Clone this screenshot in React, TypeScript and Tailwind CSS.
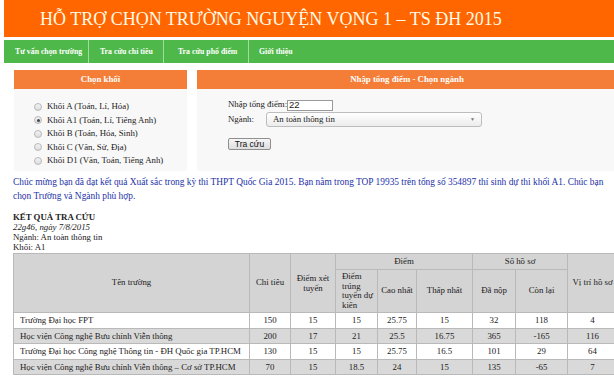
import React from "react";

const serif = { fontFamily: '"Liberation Serif", "Times New Roman", serif' };
const sans = { fontFamily: '"Liberation Sans", Arial, sans-serif' };

const khoi = [
  { label: "Khối A (Toán, Lí, Hóa)", checked: false },
  { label: "Khối A1 (Toán, Lí, Tiếng Anh)", checked: true },
  { label: "Khối B (Toán, Hóa, Sinh)", checked: false },
  { label: "Khối C (Văn, Sử, Địa)", checked: false },
  { label: "Khối D1 (Văn, Toán, Tiếng Anh)", checked: false },
];

const rows = [
  ["Trường Đại học FPT", "150", "15", "15", "25.75", "15", "32", "118", "4"],
  ["Học viện Công nghệ Bưu chính Viễn thông", "200", "17", "21", "25.5", "16.75", "365", "-165", "116"],
  ["Trường Đại học Công nghệ Thông tin - ĐH Quốc gia TP.HCM", "130", "15", "15", "25.75", "16.5", "101", "29", "64"],
  ["Học viện Công nghệ Bưu chính Viễn thông – Cơ sở TP.HCM", "70", "15", "18.5", "24", "15", "135", "-65", "7"],
];

const navItems = ["Tư vấn chọn trường", "Tra cứu chỉ tiêu", "Tra cứu phổ điểm", "Giới thiệu"];

function Radio({ checked }: { checked: boolean }) {
  return (
    <span className="w-[8px] h-[8px] rounded-full border border-[#b8b8b8] bg-gradient-to-b from-[#f4f4f4] to-[#dcdcdc] flex items-center justify-center shrink-0">
      {checked && <span className="w-[3px] h-[3px] rounded-full bg-[#444]" />}
    </span>
  );
}

export default function App() {
  return (
    <div className="w-[614px] h-[380px] overflow-hidden bg-white text-[#222]" style={serif}>
      <div className="w-[660px] pl-[4px]">
        {/* Header */}
        <div className="h-[37px] bg-[#ff6600] flex items-center pl-[36px]">
          <h1 className="text-[18px] leading-none text-[#fffbe8] whitespace-nowrap">
            HỖ TRỢ CHỌN TRƯỜNG NGUYỆN VỌNG 1 – TS ĐH 2015
          </h1>
        </div>

        {/* Nav */}
        <div className="mt-[3px] h-[23px] bg-[#4fb84a] flex">
          {navItems.map((n, i) => (
            <div
              key={n}
              className={
                "flex items-center whitespace-nowrap text-white font-bold text-[7.8px] " +
                (i === 0 ? "w-[85px] pl-[11px] " : i === 1 ? "w-[75px] pl-[11px] " : i === 2 ? "w-[85px] pl-[14px] " : "pl-[10px] ") +
                (i < 3 ? "border-r border-[#a4dca0]" : "")
              }
            >
              {n}
            </div>
          ))}
        </div>

        {/* Panels */}
        <div className="mt-[7px] flex gap-[10px] pl-[10px]">
          <div className="w-[173px] bg-[#f8f8f8]">
            <div className="h-[19px] bg-[#f47e38] flex items-center justify-center text-white font-bold text-[8.8px]">
              Chọn khối
            </div>
            <div className="h-[82px] pt-[11px] pl-[20px] flex flex-col">
              {khoi.map((k) => (
                <div key={k.label} className="h-[13.5px] flex items-center gap-[5px] text-[8.8px] whitespace-nowrap">
                  <Radio checked={k.checked} />
                  <span>{k.label}</span>
                </div>
              ))}
            </div>
          </div>

          <div className="w-[420px] bg-[#f8f8f8]">
            <div className="h-[19px] bg-[#f47e38] flex items-center justify-center text-white font-bold text-[8.8px]">
              Nhập tổng điểm - Chọn ngành
            </div>
            <div className="h-[82px] pl-[31px] pt-[10px] text-[8.8px] whitespace-nowrap">
              <div className="flex items-center h-[12px]">
                <span className="w-[59px]">Nhập tổng điểm:</span>
                <div
                  className="w-[46px] h-[11px] bg-white border border-[#9a9a9a] flex items-center pl-[1px] text-[9.5px]"
                  style={sans}
                >
                  22
                </div>
              </div>
              <div className="flex items-center h-[15px] mt-[1px]">
                <span className="w-[38px]">Ngành:</span>
                <div className="w-[216px] h-[15px] rounded-[3px] border border-[#bdbdbd] bg-gradient-to-b from-white to-[#ececec] flex items-center justify-between px-[6px]">
                  <span>An toàn thông tin</span>
                  <span className="text-[5px] text-[#777]">▼</span>
                </div>
              </div>
              <div className="mt-[11px]">
                <div
                  className="w-[43px] h-[12px] border border-[#8f8f8f] rounded-[2px] bg-gradient-to-b from-[#f6f6f6] to-[#dedede] flex items-center justify-center text-[8.5px] text-[#111]"
                  style={sans}
                >
                  Tra cứu
                </div>
              </div>
            </div>
          </div>
        </div>

        {/* Congrats */}
        <div className="pl-[9px] mt-[5px] text-[9.4px] leading-[13.5px] text-[#2432a8] w-[608px]">
          Chúc mừng bạn đã đạt kết quả Xuất sắc trong kỳ thi THPT Quốc Gia 2015. Bạn nằm trong TOP 19935 trên tổng số 354897 thí sinh dự thi khối A1. Chúc bạn chọn Trường và Ngành phù hợp.
        </div>

        {/* Result info */}
        <div className="pl-[9px] mt-[9px] text-[8.8px] leading-[10px]">
          <div className="font-bold">KẾT QUẢ TRA CỨU</div>
          <div className="italic">22g46, ngày 7/8/2015</div>
          <div>Ngành: An toàn thông tin</div>
          <div>Khối: A1</div>
        </div>

        {/* Table */}
        <div className="pl-[9px] mt-[1px]">
          <table className="border-collapse text-[8.8px] table-fixed w-[604px]">
            <colgroup>
              <col className="w-[236px]" />
              <col className="w-[41px]" />
              <col className="w-[45px]" />
              <col className="w-[42px]" />
              <col className="w-[39px]" />
              <col className="w-[56px]" />
              <col className="w-[43px]" />
              <col className="w-[52px]" />
              <col className="w-[50px]" />
            </colgroup>
            <thead className="bg-[#d4d4d4]">
              <tr className="h-[16px]">
                <th rowSpan={2} className="border border-[#b9b9b9] font-normal">Tên trường</th>
                <th rowSpan={2} className="border border-[#b9b9b9] font-normal">Chỉ tiêu</th>
                <th rowSpan={2} className="border border-[#b9b9b9] font-normal leading-[10px]">
                  Điểm xét
                  <br />
                  tuyển
                </th>
                <th colSpan={3} className="border border-[#b9b9b9] font-normal">Điểm</th>
                <th colSpan={2} className="border border-[#b9b9b9] font-normal">Số hồ sơ</th>
                <th rowSpan={2} className="border border-[#b9b9b9] font-normal whitespace-nowrap">Vị trí hồ sơ</th>
              </tr>
              <tr className="h-[43px]">
                <th className="border border-[#b9b9b9] font-normal text-left pl-[6px] leading-[9.5px]">
                  Điểm
                  <br />
                  trúng
                  <br />
                  tuyển dự
                  <br />
                  kiến
                </th>
                <th className="border border-[#b9b9b9] font-normal">Cao nhất</th>
                <th className="border border-[#b9b9b9] font-normal">Thấp nhất</th>
                <th className="border border-[#b9b9b9] font-normal">Đã nộp</th>
                <th className="border border-[#b9b9b9] font-normal">Còn lại</th>
              </tr>
            </thead>
            <tbody>
              {rows.map((r, i) => (
                <tr key={i} className={"h-[15.5px] " + (i % 2 === 1 ? "bg-[#d9d9d9]" : "bg-white")}>
                  {r.map((c, j) => (
                    <td
                      key={j}
                      className={
                        "border border-[#b9b9b9] leading-[10px] whitespace-nowrap " + (j === 0 ? "text-left pl-[6px]" : "text-center")
                      }
                    >
                      {c}
                    </td>
                  ))}
                </tr>
              ))}
            </tbody>
          </table>
        </div>
      </div>
    </div>
  );
}
